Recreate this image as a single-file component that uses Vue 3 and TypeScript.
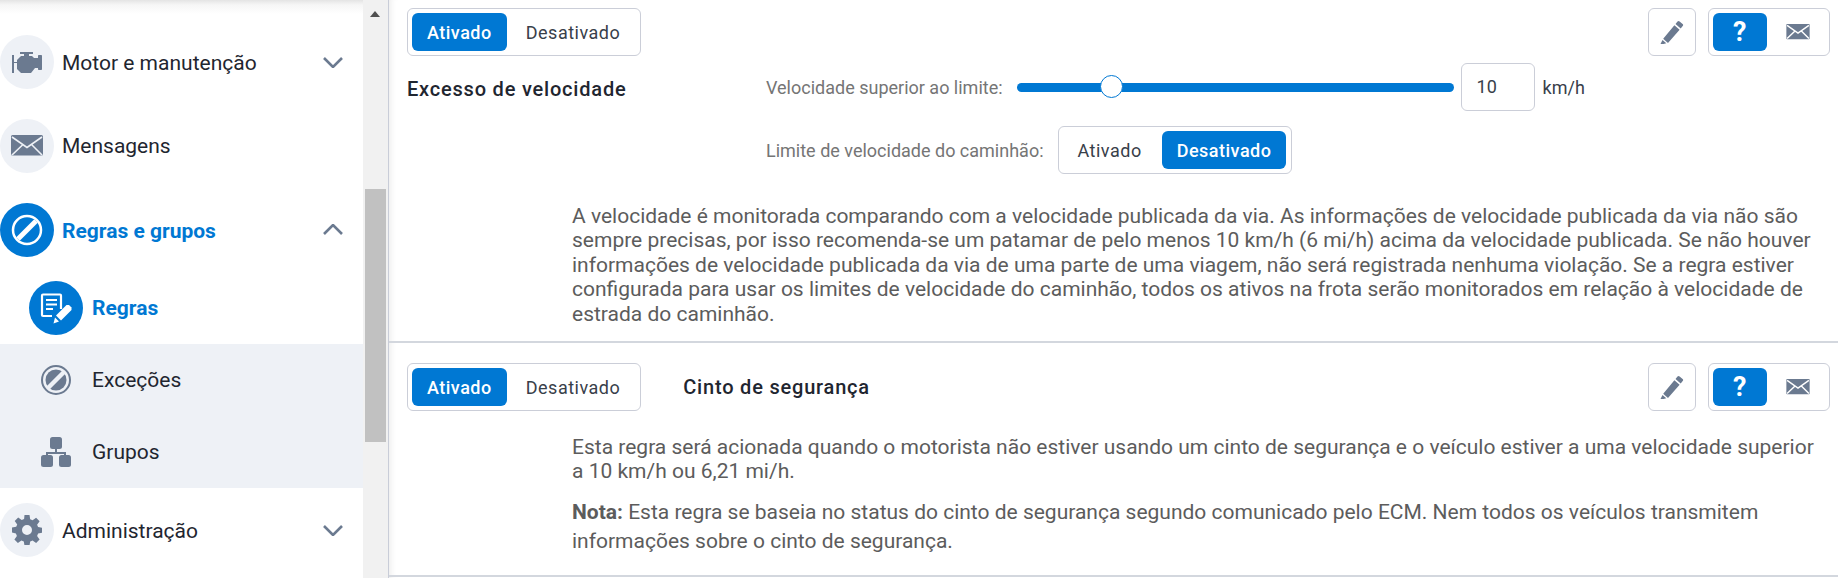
<script setup lang="ts">
const thumbPos = 21.7
</script>

<template>
  <div class="page">
    <aside class="sidebar">
      <div class="top-shade"></div>
      <nav class="nav">
        <div class="nav-item cut">
          <span class="circle"></span>
        </div>
        <div class="nav-item">
          <span class="circle">
            <svg width="30" height="21" viewBox="0 0 30 21">
              <path fill="#6b7a90" d="M8 0h13v2h-4v2h3l2 2h4V4c0-.6.4-1 1-1h2c.6 0 1 .4 1 1v13c0 .6-.4 1-1 1h-2c-.6 0-1-.4-1-1v-1h-3l-4 5H9l-4-4v-6H2v10H0V3h2v7h3V8l4-4h3V2H8z"/>
            </svg>
          </span>
          <span class="nav-text">Motor e manutenção</span>
          <svg class="chev" width="20" height="12" viewBox="0 0 20 12"><path d="M1 2l9 9 9-9" /></svg>
        </div>
        <div class="nav-item flat">
          <span class="circle">
            <svg width="32" height="22" viewBox="0 0 32 22">
              <rect width="32" height="20.5" rx="1.5" fill="#6b7a90"/>
              <path d="M1 2l15 10.5L31 2M1 20l10.500-10M31 20L21 10" fill="none" stroke="#eef1f6" stroke-width="1.600"/>
            </svg>
          </span>
          <span class="nav-text">Mensagens</span>
        </div>
        <div class="nav-item active">
          <span class="circle">
            <svg width="32" height="32" viewBox="0 0 32 32">
              <circle cx="16" cy="16" r="14" fill="none" stroke="#fff" stroke-width="2.500"/>
              <path d="M7 25L25 7" stroke="#fff" stroke-width="5"/>
            </svg>
          </span>
          <span class="nav-text">Regras e grupos</span>
          <svg class="chev" width="20" height="12" viewBox="0 0 20 12"><path d="M1 10l9-9 9 9" /></svg>
        </div>
        <div class="sub-item current">
          <span class="circle">
            <svg width="32" height="32" viewBox="0 0 32 32">
              <path fill="none" stroke="#fff" stroke-width="2.200" d="M21 17V3.500a1 1 0 0 0-1-1H3a1 1 0 0 0-1 1V23a1 1 0 0 0 1 1h9"/>
              <path stroke="#fff" stroke-width="2" d="M6 8h11M6 12.500h11M6 17h7"/>
              <path fill="#fff" d="M26.500 13l2.500 0 2.500 2.500 0 2.500-10.500 10.500-5-5z"/>
              <path fill="#fff" d="M15 25.500l4 4-5.500 2z"/>
            </svg>
          </span>
          <span class="nav-text">Regras</span>
        </div>
        <div class="sub-list">
          <div class="sub-item">
            <span class="sub-icon">
              <svg width="30" height="30" viewBox="0 0 30 30">
                <circle cx="15" cy="15" r="14" fill="none" stroke="#6b7a90" stroke-width="2"/>
                <circle cx="15" cy="15" r="10.500" fill="#6b7a90"/>
                <path d="M7 23L23 7" stroke="#eef1f6" stroke-width="4.500"/>
              </svg>
            </span>
            <span class="nav-text">Exceções</span>
          </div>
          <div class="sub-item">
            <span class="sub-icon">
              <svg width="30" height="30" viewBox="0 0 30 30">
                <rect x="9" y="0" width="12" height="12" rx="2.500" fill="#6b7a90"/>
                <rect x="0" y="18" width="12" height="12" rx="2.500" fill="#6b7a90"/>
                <rect x="18" y="18" width="12" height="12" rx="2.500" fill="#6b7a90"/>
                <path d="M15 11v5M6 19v-3h18v3" fill="none" stroke="#6b7a90" stroke-width="2"/>
              </svg>
            </span>
            <span class="nav-text">Grupos</span>
          </div>
        </div>
        <div class="nav-item admin">
          <span class="circle">
            <svg width="30" height="30" viewBox="0 0 30 30">
              <path fill="#6b7a90" fill-rule="evenodd" d="M12.500 0h5l.7 4.200 2.400 1 3.500-2.500 3.500 3.500-2.500 3.500 1 2.400 4.200.7v5l-4.200.7-1 2.400 2.500 3.500-3.500 3.500-3.500-2.500-2.400 1-.7 4.200h-5l-.7-4.200-2.400-1-3.500 2.500-3.500-3.500 2.500-3.500-1-2.400L0 17.500v-5l4.200-.7 1-2.400-2.500-3.500 3.500-3.500 3.500 2.500 2.400-1zM15 10a5 5 0 1 0 0 10 5 5 0 0 0 0-10z"/>
            </svg>
          </span>
          <span class="nav-text">Administração</span>
          <svg class="chev" width="20" height="12" viewBox="0 0 20 12"><path d="M1 2l9 9 9-9" /></svg>
        </div>
      </nav>
      <div class="scrollbar">
        <span class="arrow"></span>
        <span class="thumb"></span>
      </div>
    </aside>

    <main class="main">
      <section class="rule first">
        <div class="head">
          <div class="toggle">
            <button class="seg on">Ativado</button>
            <button class="seg off">Desativado</button>
          </div>
          <div class="actions">
            <button class="icon-box">
              <svg width="24" height="24" viewBox="0 0 24 24">
                <path fill="#6b7a90" d="M17.500 1.500a1.500 1.500 0 0 1 2.100 0l3 2.500a1.500 1.500 0 0 1 .1 2.100l-2 2.400-5.200-4.500zM14.400 5.200l5.200 4.500L8 23l-3.200-2.800L3.500 19l-.3-.2zM2.500 20l3.800 3.200L0 25z"/>
              </svg>
            </button>
            <div class="toggle small">
              <button class="seg icon on"><span class="q">?</span></button>
              <button class="seg icon">
                <svg width="24" height="16" viewBox="0 0 32 22">
                  <rect width="32" height="21" rx="1" fill="#6b7a90"/>
                  <path d="M1 2l15 10.500L31 2M1 20l10.500-10M31 20L21 10" fill="none" stroke="#fff" stroke-width="2"/>
                </svg>
              </button>
            </div>
          </div>
        </div>
        <div class="settings">
          <h3 class="title wide">Excesso de velocidade</h3>
          <div class="fields">
            <div class="field">
              <span class="label">Velocidade superior ao limite:</span>
              <div class="slider">
                <span class="slider-thumb" :style="{ left: thumbPos + '%' }"></span>
              </div>
              <div class="num">10</div>
              <span class="unit">km/h</span>
            </div>
            <div class="field second">
              <span class="label">Limite de velocidade do caminhão:</span>
              <div class="toggle roomy">
                <button class="seg">Ativado</button>
                <button class="seg on">Desativado</button>
              </div>
            </div>
          </div>
        </div>
        <p class="desc speed">A velocidade é monitorada comparando com a velocidade publicada da via. As informações de velocidade publicada da via não são sempre precisas, por isso recomenda-se um patamar de pelo menos 10 km/h (6 mi/h) acima da velocidade publicada. Se não houver informações de velocidade publicada da via de uma parte de uma viagem, não será registrada nenhuma violação. Se a regra estiver configurada para usar os limites de velocidade do caminhão, todos os ativos na frota serão monitorados em relação à velocidade de estrada do caminhão.</p>
      </section>

      <section class="rule">
        <div class="head">
          <div class="head-left">
            <div class="toggle">
              <button class="seg on">Ativado</button>
              <button class="seg off">Desativado</button>
            </div>
            <h3 class="title">Cinto de segurança</h3>
          </div>
          <div class="actions">
            <button class="icon-box">
              <svg width="24" height="24" viewBox="0 0 24 24">
                <path fill="#6b7a90" d="M17.500 1.500a1.500 1.500 0 0 1 2.100 0l3 2.500a1.500 1.500 0 0 1 .1 2.100l-2 2.400-5.200-4.500zM14.400 5.200l5.200 4.500L8 23l-3.200-2.800L3.500 19l-.3-.2zM2.500 20l3.800 3.200L0 25z"/>
              </svg>
            </button>
            <div class="toggle small">
              <button class="seg icon on"><span class="q">?</span></button>
              <button class="seg icon">
                <svg width="24" height="16" viewBox="0 0 32 22">
                  <rect width="32" height="21" rx="1" fill="#6b7a90"/>
                  <path d="M1 2l15 10.500L31 2M1 20l10.500-10M31 20L21 10" fill="none" stroke="#fff" stroke-width="2"/>
                </svg>
              </button>
            </div>
          </div>
        </div>
        <p class="desc belt">Esta regra será acionada quando o motorista não estiver usando um cinto de segurança e o veículo estiver a uma velocidade superior a 10 km/h ou 6,21 mi/h.</p>
        <p class="desc note"><strong>Nota:</strong> Esta regra se baseia no status do cinto de segurança segundo comunicado pelo ECM. Nem todos os veículos transmitem informações sobre o cinto de segurança.</p>
      </section>
    </main>
  </div>
</template>

<style>
html, body {
  margin: 0;
  background: #fff;
  overflow: hidden;
}
</style>

<style scoped>
.page {
  display: flex;
  width: 1838px;
  height: 578px;
  overflow: hidden;
  font-family: Roboto, "Liberation Sans", sans-serif;
  color: #1f2630;
}

.sidebar {
  position: relative;
  display: flex;
  flex: 0 0 389px;
  border-right: 1px solid #c9cdd8;
  box-sizing: border-box;
  height: 578px;
  overflow: hidden;
}

.top-shade {
  position: absolute;
  left: 0;
  top: 0;
  width: 363px;
  height: 14px;
  background: linear-gradient(#e4e4e4 0, #f6f6f6 35%, rgba(255, 255, 255, 0) 100%);
}

.nav {
  width: 363px;
  flex: none;
  display: flex;
  flex-direction: column;
}

.nav-item {
  display: flex;
  align-items: center;
  height: 54px;
  margin-bottom: 30px;
  padding-right: 20px;
}

.nav-item.cut {
  margin-top: -49px;
}

.nav-item.active {
  margin-bottom: 24px;
}

.nav-item.admin {
  margin-top: 15px;
}

.circle {
  flex: none;
  width: 54px;
  height: 54px;
  border-radius: 50%;
  background: #eef1f6;
  display: flex;
  align-items: center;
  justify-content: center;
}

.nav-text {
  margin-left: 8px;
  padding-top: 1px;
  font-size: 21px;
  line-height: 24px;
}

.flat .nav-text {
  padding-top: 0;
}

.sub-item .nav-text {
  margin-left: 9px;
  padding-top: 0;
}

.chev {
  margin-left: auto;
  fill: none;
  stroke: #6b7a90;
  stroke-width: 2.600;
}

.active .circle,
.current .circle {
  background: #0078d3;
}

.active .nav-text,
.current .nav-text {
  color: #0078d3;
  font-weight: 700;
}

.sub-item {
  display: flex;
  align-items: center;
  height: 72px;
  padding-left: 29px;
}

.sub-item.current {
  height: 54px;
  margin-bottom: 9px;
}

.sub-list {
  background: #eef1f6;
}

.sub-icon {
  flex: none;
  width: 54px;
  display: flex;
  justify-content: center;
}

.scrollbar {
  position: relative;
  flex: 1;
  background: #f1f1f1;
}

.arrow {
  position: absolute;
  left: 7px;
  top: 11px;
  border-left: 5.500px solid transparent;
  border-right: 5.500px solid transparent;
  border-bottom: 6px solid #505050;
}

.thumb {
  position: absolute;
  left: 2px;
  top: 189px;
  width: 21px;
  height: 253px;
  background: #c1c1c1;
}

.main {
  flex: 1;
  min-width: 0;
  box-shadow: inset 7px 0 7px -6px #e8e8e8;
}

.rule {
  box-sizing: border-box;
  padding: 0 8px 0 18px;
  border-bottom: 2px solid #d3d7de;
}

.rule.first {
  height: 343px;
  padding-top: 8px;
}

.rule:not(.first) {
  height: 234px;
  padding-top: 20px;
}

.head {
  display: flex;
  justify-content: space-between;
  align-items: flex-start;
}

.head-left {
  display: flex;
  align-items: center;
  gap: 42px;
}

.toggle {
  display: inline-flex;
  box-sizing: border-box;
  height: 48px;
  padding: 4px;
  border: 1px solid #cbced8;
  border-radius: 6px;
  background: #fff;
  gap: 4px;
}

.toggle.roomy {
  gap: 5px;
  padding-right: 4.500px;
}

.seg {
  height: 38px;
  padding: 0 15px;
  border: 0;
  border-radius: 6px;
  background: transparent;
  font: inherit;
  font-size: 18px;
  letter-spacing: 0.500px;
  color: #38404a;
}

.seg.on {
  background: #0078d3;
  color: #fff;
  font-weight: 500;
}

.seg.off {
  padding-right: 16px;
}

.seg.icon {
  width: 54px;
  padding: 0;
  display: flex;
  align-items: center;
  justify-content: center;
}

.q {
  font-size: 27px;
  font-weight: 700;
  line-height: 1;
}

.actions {
  display: flex;
  gap: 12px;
}

.icon-box {
  width: 48px;
  height: 48px;
  padding: 0;
  border: 1px solid #cbced8;
  border-radius: 6px;
  background: #fff;
  display: flex;
  align-items: center;
  justify-content: center;
}

.settings {
  display: flex;
  margin-top: 7px;
}

.title {
  margin: 0;
  font-size: 20px;
  font-weight: 500;
  letter-spacing: 0.800px;
  line-height: 24px;
  color: #1f2630;
}

.title.wide {
  width: 359px;
  flex: none;
  padding-top: 14px;
}

.field {
  display: flex;
  align-items: center;
  height: 48px;
}

.field.second {
  margin-top: 15px;
}

.label {
  font-size: 18px;
  color: #757575;
  margin-right: 14px;
}

.slider {
  position: relative;
  width: 437px;
  height: 9px;
  border-radius: 5px;
  background: #0078d3;
}

.slider-thumb {
  position: absolute;
  top: -8px;
  width: 23px;
  height: 23px;
  margin-left: -11px;
  box-sizing: border-box;
  border: 1px solid #0078d3;
  border-radius: 50%;
  background: #fff;
}

.num {
  box-sizing: border-box;
  width: 74px;
  height: 48px;
  margin-left: 7px;
  padding-left: 15px;
  border: 1px solid #cbced8;
  border-radius: 6px;
  font-size: 18px;
  line-height: 46px;
  color: #38404a;
}

.unit {
  margin-left: 8px;
  font-size: 18px;
  color: #38404a;
}

.desc {
  margin: 0 0 0 165px;
  font-size: 21px;
  line-height: 24.400px;
  color: #5c5c5c;
}

.desc.speed {
  margin-top: 30px;
}

.desc.belt {
  margin-top: 24px;
}

.desc.note {
  margin-top: 14px;
  line-height: 29.500px;
}

.desc strong {
  font-weight: 700;
}
</style>
